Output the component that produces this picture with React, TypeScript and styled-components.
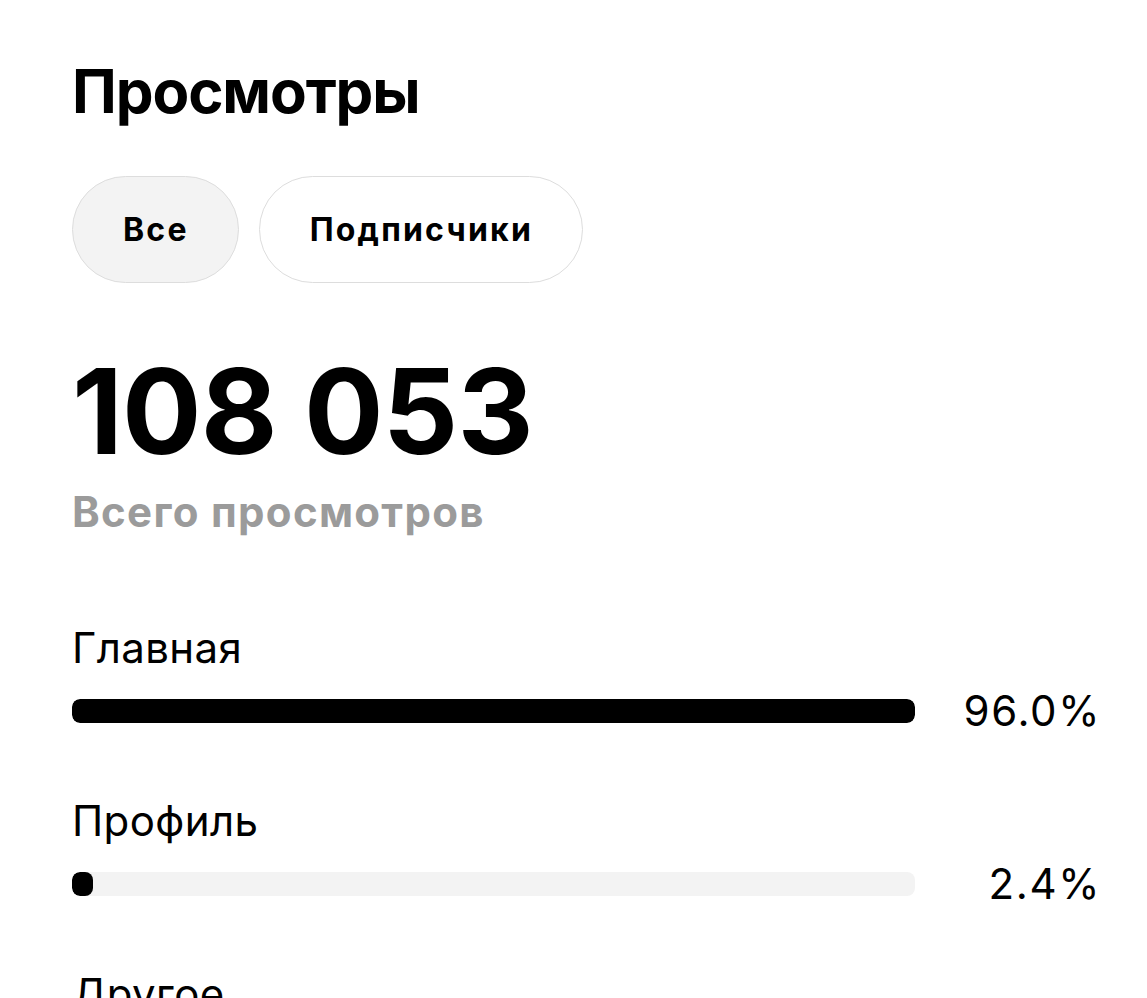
import React from "react";
import styled, { createGlobalStyle } from "styled-components";

const GlobalStyle = createGlobalStyle`
  html, body {
    margin: 0;
    padding: 0;
    background: #ffffff;
  }
  body {
    font-family: Inter, "Noto Sans", "Liberation Sans", sans-serif;
    color: #000000;
    -webkit-font-smoothing: antialiased;
  }
`;

const Page = styled.main`
  display: flex;
  flex-direction: column;
  padding: 55px 46px 0 72px;
  height: 998px;
  box-sizing: border-box;
  overflow: hidden;
`;

const Title = styled.h1`
  margin: 0;
  font-size: 60px;
  line-height: 72px;
  font-weight: 700;
  letter-spacing: -1.1px;
`;

const Tabs = styled.div`
  display: flex;
  gap: 20px;
  margin-top: 49px;
`;

const Tab = styled.button<{ $active?: boolean }>`
  height: 107px;
  padding: 0 49px 0 50px;
  border-radius: 54px;
  border: 1.5px solid #dddddd;
  background: ${(p) => (p.$active ? "#f3f3f3" : "#ffffff")};
  font-family: inherit;
  font-size: 32px;
  font-weight: 700;
  letter-spacing: 2.2px;
  color: #000000;
  cursor: pointer;
`;

const Total = styled.div`
  margin-top: 69px;
  font-size: 118px;
  line-height: 118px;
  font-weight: 700;
  letter-spacing: -0.8px;
`;

const TotalCaption = styled.div`
  margin-top: 18px;
  font-size: 42px;
  line-height: 48px;
  font-weight: 700;
  color: #9b9b9b;
  letter-spacing: 1.3px;
`;

const Sources = styled.section`
  display: flex;
  flex-direction: column;
  gap: 60px;
  margin-top: 87px;
`;

const Source = styled.div`
  display: flex;
  flex-direction: column;
  gap: 13px;
`;

const SourceName = styled.div`
  font-size: 42px;
  line-height: 50px;
  font-weight: 400;
  letter-spacing: 0.4px;
`;

const SourceStats = styled.div`
  display: grid;
  grid-template-columns: 1fr 186px;
  align-items: center;
  height: 50px;
`;

const Track = styled.div`
  height: 24px;
  border-radius: 8px;
  background: #f3f3f3;
  overflow: hidden;
`;

const Fill = styled.div`
  height: 100%;
  border-radius: 8px;
  background: #000000;
`;

const Percent = styled.div`
  text-align: right;
  font-size: 42px;
  line-height: 50px;
  font-weight: 400;
  letter-spacing: 1.6px;
`;

const sources = [
  { name: "Главная", share: 96.0 },
  { name: "Профиль", share: 2.4 },
  { name: "Другое", share: 1.6 },
];

// Bars are scaled against the largest source, so the leader fills its track.
const maxShare = Math.max(...sources.map((s) => s.share));

export default function App() {
  return (
    <>
      <GlobalStyle />
      <Page>
        <Title>Просмотры</Title>
        <Tabs>
          <Tab $active>Все</Tab>
          <Tab>Подписчики</Tab>
        </Tabs>
        <Total>108 053</Total>
        <TotalCaption>Всего просмотров</TotalCaption>
        <Sources>
          {sources.map((s) => (
            <Source key={s.name}>
              <SourceName>{s.name}</SourceName>
              <SourceStats>
                <Track>
                  <Fill style={{ width: `${(s.share / maxShare) * 100}%` }} />
                </Track>
                <Percent>{s.share.toFixed(1)}%</Percent>
              </SourceStats>
            </Source>
          ))}
        </Sources>
      </Page>
    </>
  );
}
